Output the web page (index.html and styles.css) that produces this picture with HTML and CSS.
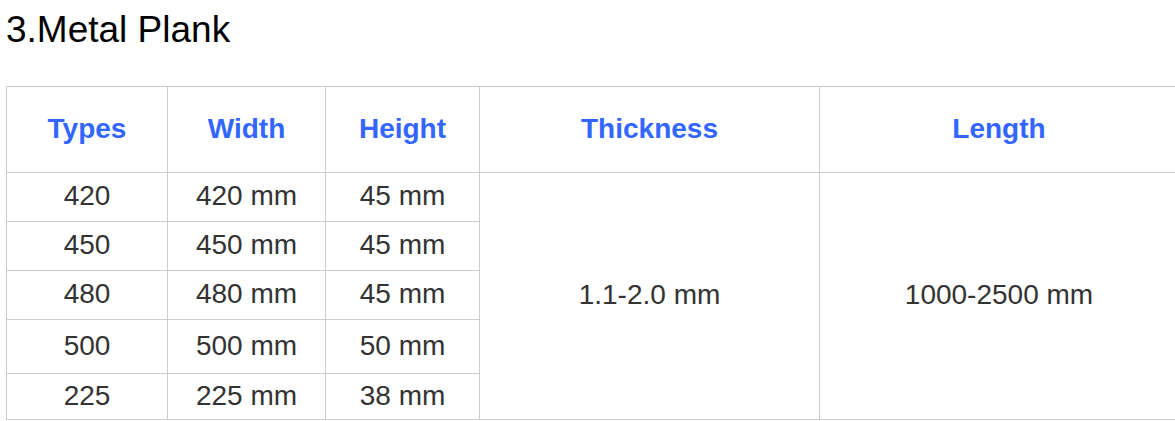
FILE: index.html
```html
<!DOCTYPE html>
<html lang="en">
<head>
<meta charset="utf-8">
<title>Metal Plank</title>
<link rel="stylesheet" href="styles.css">
</head>
<body>
<div class="page">
  <h2 class="title">3.Metal Plank</h2>
  <table class="spec">
    <colgroup>
      <col class="c-types">
      <col class="c-width">
      <col class="c-height">
      <col class="c-thick">
      <col class="c-length">
    </colgroup>
    <thead>
      <tr class="r-head">
        <th>Types</th>
        <th>Width</th>
        <th>Height</th>
        <th>Thickness</th>
        <th>Length</th>
      </tr>
    </thead>
    <tbody>
      <tr class="r-a">
        <td>420</td>
        <td>420 mm</td>
        <td>45 mm</td>
        <td rowspan="5">1.1-2.0 mm</td>
        <td rowspan="5">1000-2500 mm</td>
      </tr>
      <tr class="r-a">
        <td>450</td>
        <td>450 mm</td>
        <td>45 mm</td>
      </tr>
      <tr class="r-a">
        <td>480</td>
        <td>480 mm</td>
        <td>45 mm</td>
      </tr>
      <tr class="r-b">
        <td>500</td>
        <td>500 mm</td>
        <td>50 mm</td>
      </tr>
      <tr class="r-c">
        <td>225</td>
        <td>225 mm</td>
        <td>38 mm</td>
      </tr>
    </tbody>
  </table>
</div>
</body>
</html>
```

FILE: styles.css
```css
html, body {
  margin: 0;
  padding: 0;
  background: #ffffff;
  overflow: hidden;
}

.page {
  padding: 9px 0 0 6px;
  width: 1200px;
  font-family: "Liberation Sans", Arial, sans-serif;
}

.title {
  margin: 0 0 35px 0;
  font-size: 37px;
  font-weight: normal;
  line-height: 42px;
  color: #000000;
}

.spec {
  border-collapse: collapse;
  table-layout: fixed;
  width: 1172px;
}

.c-types { width: 161px; }
.c-width { width: 158px; }
.c-height { width: 154px; }
.c-thick { width: 340px; }
.c-length { width: 359px; }

.spec th,
.spec td {
  border: 1px solid #cccccc;
  padding: 0 0 2px 0;
  text-align: center;
  vertical-align: middle;
  font-size: 28px;
}

.spec th {
  color: #3366ff;
  font-weight: bold;
}

.spec td {
  color: #333333;
  font-weight: normal;
}

.r-head { height: 86px; }
.r-a { height: 49px; }
.r-b { height: 54px; }
.r-c { height: 46px; }
```
